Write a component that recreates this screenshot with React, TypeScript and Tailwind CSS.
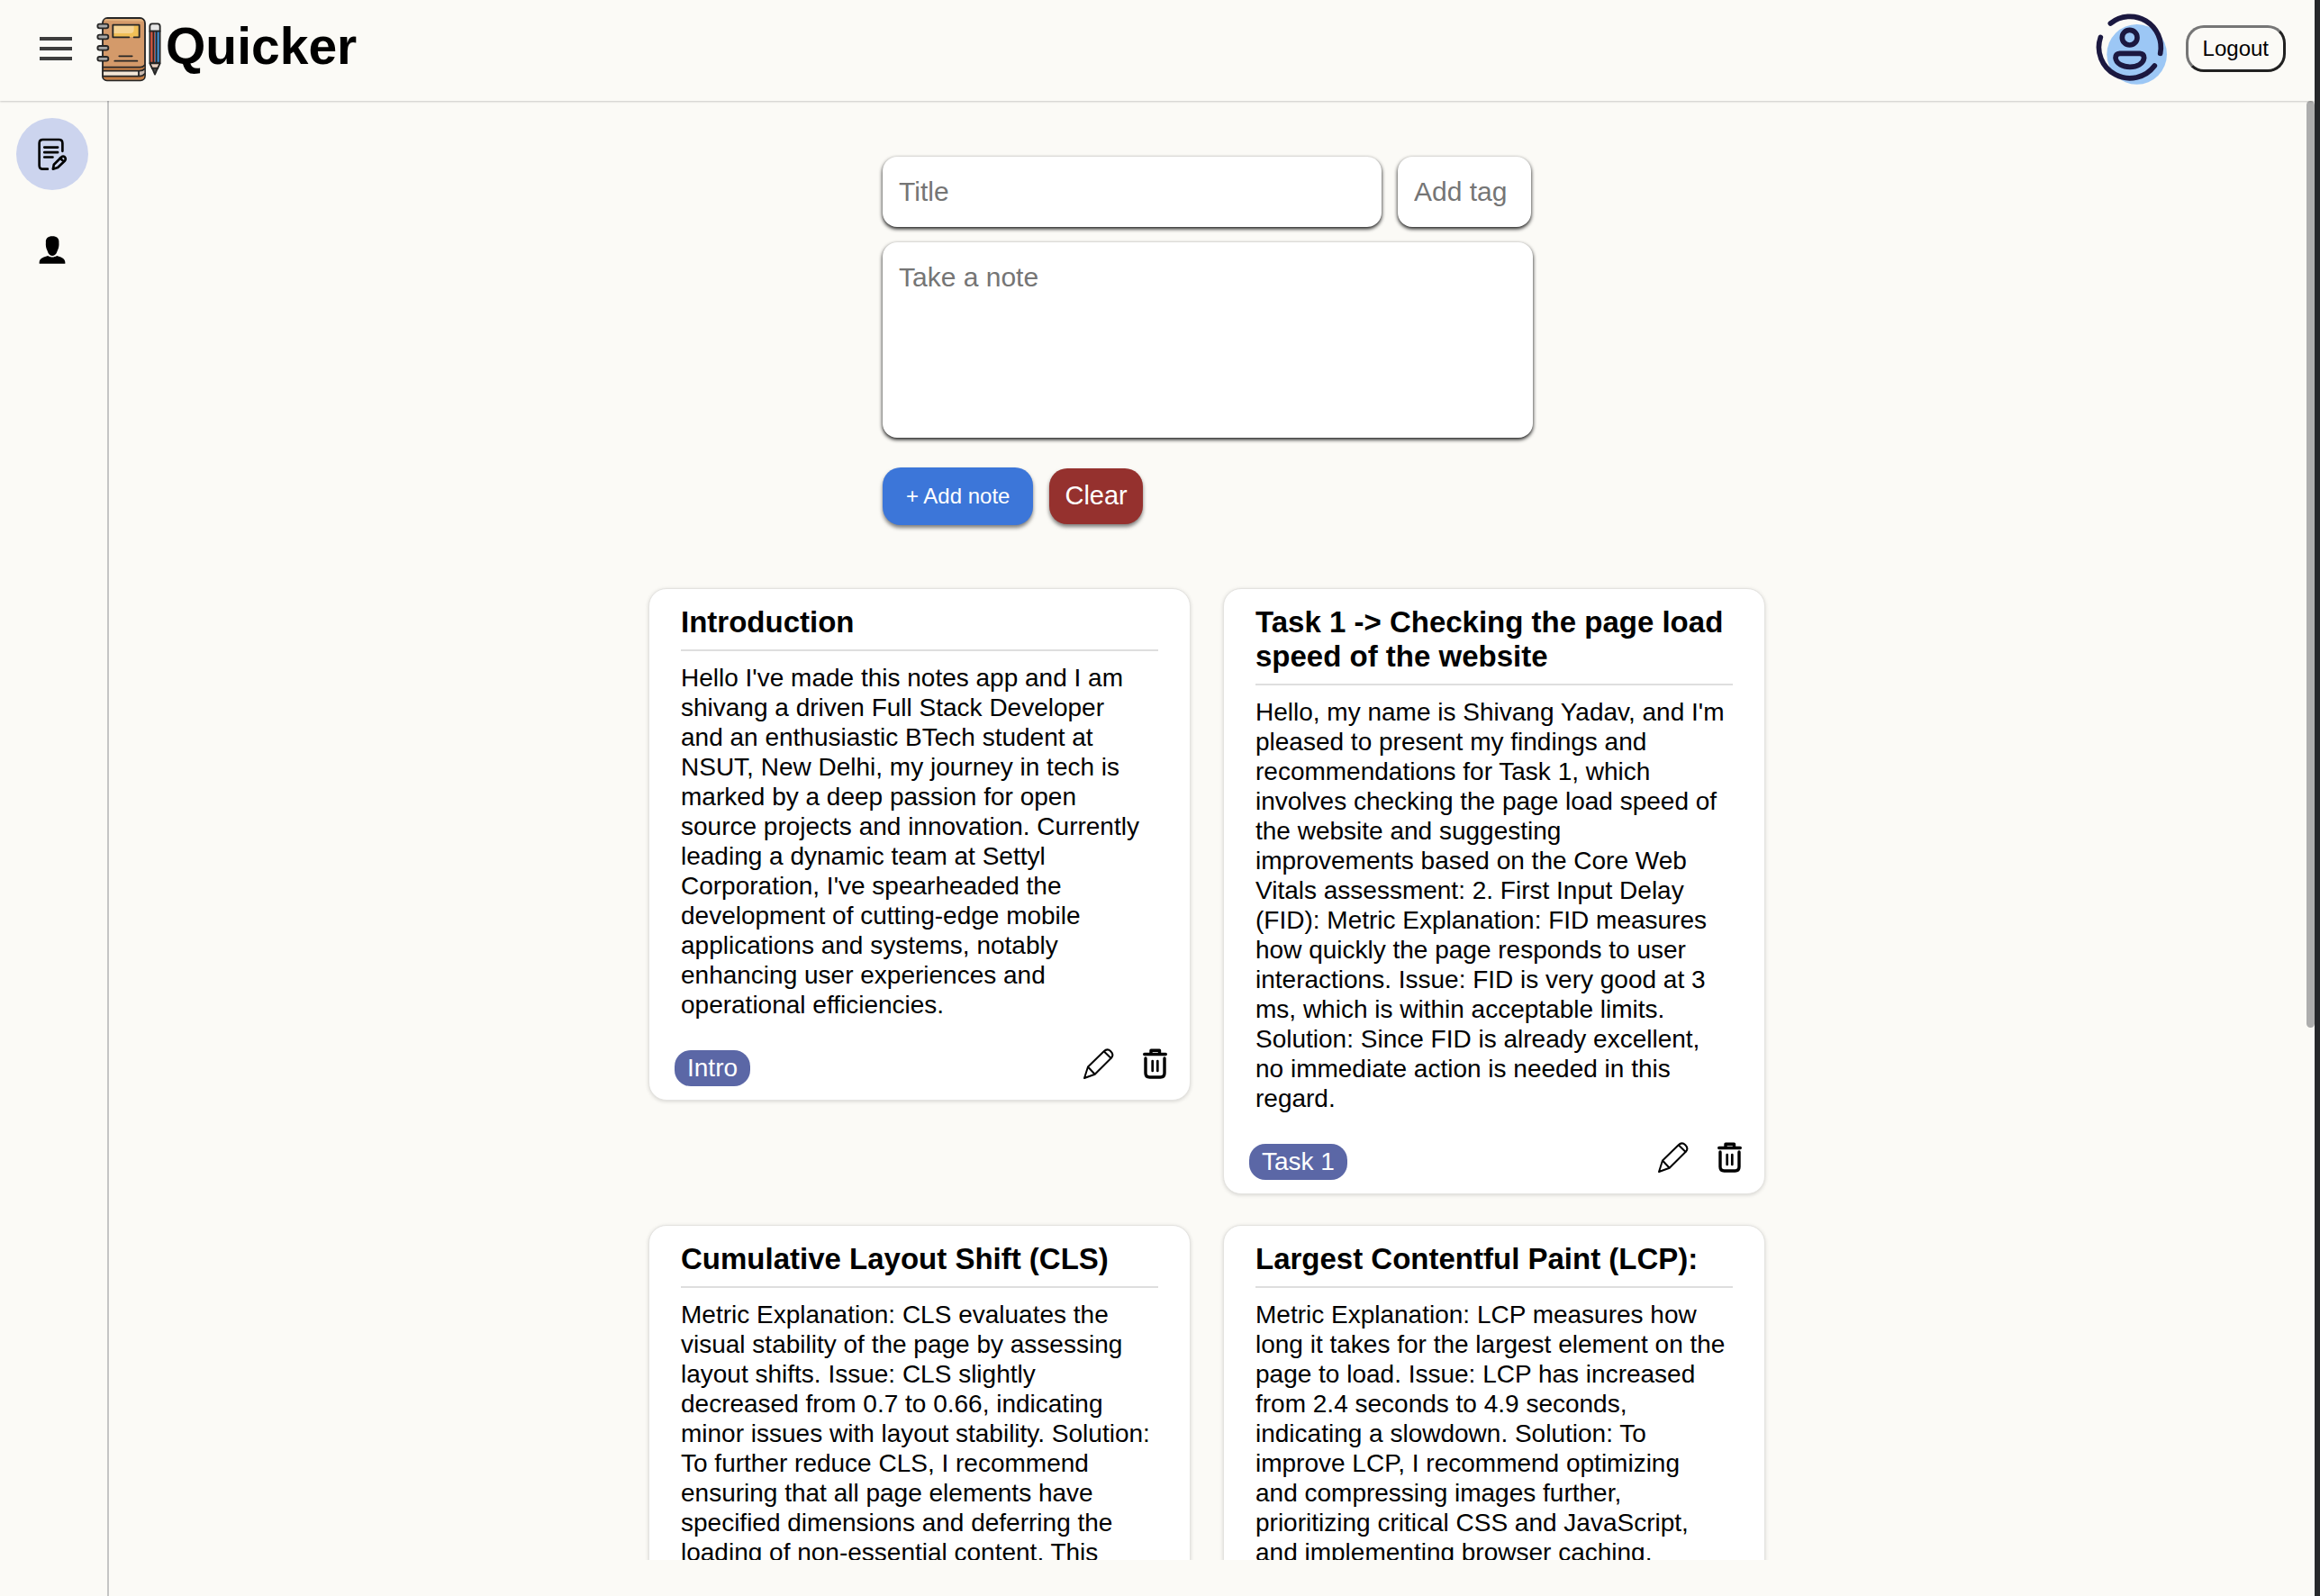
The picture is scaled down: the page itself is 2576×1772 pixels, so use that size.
import React from "react";

type Note = { title: string; body: string; tag: string };

const notes: Note[] = [
  {
    title: "Introduction",
    body: "Hello I've made this notes app and I am shivang a driven Full Stack Developer and an enthusiastic BTech student at NSUT, New Delhi, my journey in tech is marked by a deep passion for open source projects and innovation. Currently leading a dynamic team at Settyl Corporation, I've spearheaded the development of cutting-edge mobile applications and systems, notably enhancing user experiences and operational efficiencies.",
    tag: "Intro",
  },
  {
    title: "Task 1 -> Checking the page load speed of the website",
    body: "Hello, my name is Shivang Yadav, and I'm pleased to present my findings and recommendations for Task 1, which involves checking the page load speed of the website and suggesting improvements based on the Core Web Vitals assessment: 2. First Input Delay (FID): Metric Explanation: FID measures how quickly the page responds to user interactions. Issue: FID is very good at 3 ms, which is within acceptable limits. Solution: Since FID is already excellent, no immediate action is needed in this regard.",
    tag: "Task 1",
  },
  {
    title: "Cumulative Layout Shift (CLS)",
    body: "Metric Explanation: CLS evaluates the visual stability of the page by assessing layout shifts. Issue: CLS slightly decreased from 0.7 to 0.66, indicating minor issues with layout stability. Solution: To further reduce CLS, I recommend ensuring that all page elements have specified dimensions and deferring the loading of non-essential content. This",
    tag: "",
  },
  {
    title: "Largest Contentful Paint (LCP):",
    body: "Metric Explanation: LCP measures how long it takes for the largest element on the page to load. Issue: LCP has increased from 2.4 seconds to 4.9 seconds, indicating a slowdown. Solution: To improve LCP, I recommend optimizing and compressing images further, prioritizing critical CSS and JavaScript, and implementing browser caching.",
    tag: "",
  },
];

function BookLogo() {
  return (
    <svg viewBox="49 53 216 217" className="h-[73px] w-[72px] shrink-0" aria-hidden="true">
      <g stroke="#262626" strokeWidth="5.5" strokeLinejoin="round" strokeLinecap="round">
        <path d="M70 74a16 16 0 0 1 16-16h108a17 17 0 0 1 17 17v176a15 15 0 0 1-15 15H84a14 14 0 0 1-14-14z" fill="#d49a6a" />
        <path d="M73 66a14 14 0 0 1 13-5h108a14 14 0 0 1 13 8z" fill="#e3b27f" stroke="none" />
        <path d="M73 224h122q9 0 14-6v8q-2 7-12 7H73zM73 253h122q9 0 14-6v5q-1 11-13 11H84q-10 0-11-10z" fill="#c77f45" stroke="none" />
        <path d="M73 235h117v16H73z" fill="#f3e6d6" stroke="none" />
        <path d="M190 235q14 0 19-7v16q-5 8-19 8z" fill="#c9b8ad" stroke="none" />
        <path d="M71 222h124q10 0 15-7M71 234h121q12 0 17-6M71 252h121q12 0 18-8M190 235v16" fill="none" />
        <path d="M104 81h88v40h-88z" fill="#f1bf56" stroke="none" />
        <path d="M106 83h68v14q0 12-13 12h-55z" fill="#f6d494" stroke="none" />
        <path d="M158 122h-54V81h88v41h-18M125 185h43M110 201h75" fill="none" />
        {[85, 121, 158, 194].map((y) => (
          <rect key={y} x="53" y={y - 7} width="36" height="14" rx="7" fill="#a9a9a9" />
        ))}
        <path d="M227 86q0-9 8-9h18q8 0 8 9v16h-34z" fill="#e6e6e6" />
        <path d="M227 102h17v105h-17z" fill="#d2553f" stroke="none" />
        <path d="M244 102h17v105h-17z" fill="#4189c7" stroke="none" />
        <path d="M227 209h34l-8 17h-18z" fill="#e8cfc0" />
        <path d="M235 225h18l-9 21z" fill="#4a4a4a" />
        <path d="M227 102h34v105h-34zM239 104v102M249 104v102" fill="none" strokeWidth="5" />
      </g>
    </svg>
  );
}

function Avatar() {
  return (
    <svg viewBox="150 45 240 243" className="h-[81px] w-20 shrink-0" aria-hidden="true">
      <circle cx="287" cy="184" r="100" fill="#9cc7f5" />
      <g fill="none" stroke="#1b1840" strokeWidth="17" strokeLinecap="round" strokeLinejoin="round">
        <path d="M199 81A103 103 0 0 1 365 181" />
        <path d="M166 127A103 103 0 0 0 346 222" />
        <circle cx="263" cy="128" r="25" />
        <path d="M230 181h67q14 1 14 15c-3 20-24 30-47 30s-46-10-48-30q0-14 14-15z" />
      </g>
    </svg>
  );
}

function NotesIcon() {
  return (
    <svg viewBox="124 458 100 112" className="h-[37px] w-[33px]" fill="none" stroke="#000" strokeWidth="8" strokeLinecap="round" strokeLinejoin="round" aria-hidden="true">
      <path d="M157 563h-16q-12 0-12-12v-75q0-12 12-12h54q12 0 12 12v27M146 490h45M146 507h45M146 523h28" />
      <path d="M175 563l3-15 25-25q6-5 11-1 6 6 1 13l-24 23zM199 526l11 11" />
    </svg>
  );
}

function UserIcon() {
  return (
    <svg viewBox="131 786 89 94" className="h-[31px] w-[30px]" fill="#000" aria-hidden="true">
      <path d="M176 787c15 0 23 8 22 20 1 12-1 20-4 26-3 8-6 19-18 20-12-1-15-12-18-20-3-6-5-14-4-26-1-12 7-20 22-20z" />
      <path d="M132 879v-5c2-14 17-17 29-21 9 6 21 6 30 0 12 4 26 7 28 21v5z" />
    </svg>
  );
}

function PencilIcon() {
  return (
    <svg viewBox="0 0 34 34" className="size-[34px]" fill="none" stroke="#000" strokeWidth="2" strokeLinecap="round" strokeLinejoin="round" aria-hidden="true">
      <path d="M1 33L5 20.500 22.700 3.300Q26.500-.500 30.300 3.200T31 10.500L12.700 28.700zM5 20.500l7.700 8.200M22.700 3.300l8 7.700" />
    </svg>
  );
}

function TrashIcon() {
  return (
    <svg viewBox="0 0 27 34" className="h-[34px] w-[27px]" fill="none" stroke="#000" strokeLinecap="round" strokeLinejoin="round" aria-hidden="true">
      <path d="M1.700 6.500h23.600M9 6V2.200h9.500V6M3 11v16.500q0 4.500 4.500 4.500h12q4.500 0 4.500-4.500V11" strokeWidth="3.400" />
      <path d="M10.700 14v11M16.300 14v11" strokeWidth="2.700" />
    </svg>
  );
}

function NoteCard({ note }: { note: Note }) {
  return (
    <article className="rounded-[20px] border border-[#e4e3e0] bg-white shadow-[0_1px_4px_rgba(0,0,0,0.15)]">
      <div className="px-[35px] pt-[18px]">
        <h2 className="border-b-2 border-[#dedede] pb-[11px] text-[33px]/[38px] font-bold">{note.title}</h2>
        <p className="max-w-[522px] pt-[13px] text-[28px]/[33px]">{note.body}</p>
      </div>
      <footer className="flex items-start justify-between pt-8 pr-[25px] pb-[15px] pl-7">
        <span className="mt-[2px] rounded-[18px] bg-[#5b67a6] px-[14px] text-[28px]/[40px] text-white">{note.tag}</span>
        <span className="flex gap-8">
          <button type="button" aria-label="Edit note"><PencilIcon /></button>
          <button type="button" aria-label="Delete note"><TrashIcon /></button>
        </span>
      </footer>
    </article>
  );
}

const field =
  "rounded-[16px] bg-white px-[18px] text-[30px]/[36px] shadow-[0_2px_4px_rgba(0,0,0,0.95)] outline-none placeholder:text-[#757575]";

export default function App() {
  return (
    <div className="flex h-screen border-r-[6px] border-[#26282b] bg-[#fbfaf6] font-['Liberation_Sans',Arial,sans-serif] text-black">
      <div className="flex min-w-0 flex-1 flex-col">
        <header className="z-10 flex h-28 shrink-0 items-center justify-between pr-8 pb-1 pl-11 shadow-[0_1px_2px_rgba(0,0,0,0.2)]">
          <div className="flex items-center">
            <button type="button" aria-label="Menu" className="mr-[27px] flex w-9 flex-col gap-[7px]">
              <span className="h-1 bg-[#3d3d3d]" />
              <span className="h-1 bg-[#3d3d3d]" />
              <span className="h-1 bg-[#3d3d3d]" />
            </button>
            <BookLogo />
            <h1 className="pb-[6px] pl-[5px] text-[57px]/[64px] font-bold">Quicker</h1>
          </div>
          <div className="flex items-center gap-5">
            <Avatar />
            <button
              type="button"
              className="h-[52px] rounded-[20px] border-[3px] border-t-[#767676] border-r-[#212121] border-b-[#212121] border-l-[#767676] px-4 text-2xl"
            >
              Logout
            </button>
          </div>
        </header>
        <div className="flex min-h-0 flex-1">
          <nav className="flex w-[121px] shrink-0 flex-col items-center border-r-2 border-[#c4c4c4] pt-[19px] pr-[3px]">
            <a href="#notes" aria-label="Notes" className="flex size-20 items-center justify-center rounded-full bg-[#ccd4ee]">
              <NotesIcon />
            </a>
            <a href="#profile" aria-label="Profile" className="mt-[26px] flex size-20 items-center justify-center">
              <UserIcon />
            </a>
          </nav>
          <main className="mb-10 min-w-0 flex-1 overflow-hidden pt-[62px]">
            <form className="mx-auto flex w-[722px] flex-col" onSubmit={(e) => e.preventDefault()}>
              <div className="flex gap-[18px] pr-[2px]">
                <input aria-label="Title" placeholder="Title" className={`${field} h-[78px] min-w-0 flex-1`} />
                <input aria-label="Add tag" placeholder="Add tag" className={`${field} h-[78px] w-[148px]`} />
              </div>
              <textarea aria-label="Take a note" placeholder="Take a note" className={`${field} mt-[17px] h-[217px] resize-none py-[21px]`} />
              <div className="mt-[33px] flex items-center gap-[18px] text-white">
                <button type="submit" className="h-16 rounded-[20px] bg-[#3c76d9] px-[26px] text-2xl shadow-[0_3px_4px_rgba(0,0,0,0.5)]">
                  + Add note
                </button>
                <button type="button" className="h-[62px] rounded-[20px] bg-[#95312e] px-[17px] text-[29px] shadow-[0_3px_4px_rgba(0,0,0,0.5)]">
                  Clear
                </button>
              </div>
            </form>
            <section aria-label="Notes" className="mx-auto mt-[70px] grid w-[1242px] grid-cols-2 items-start gap-x-9 gap-y-[34px] pr-[2px]">
              {notes.map((n) => (
                <NoteCard key={n.title} note={n} />
              ))}
            </section>
          </main>
          <div className="w-[9px] shrink-0" aria-hidden="true">
            <div className="h-[62%] rounded-full bg-[#adadad]" />
          </div>
        </div>
      </div>
    </div>
  );
}
